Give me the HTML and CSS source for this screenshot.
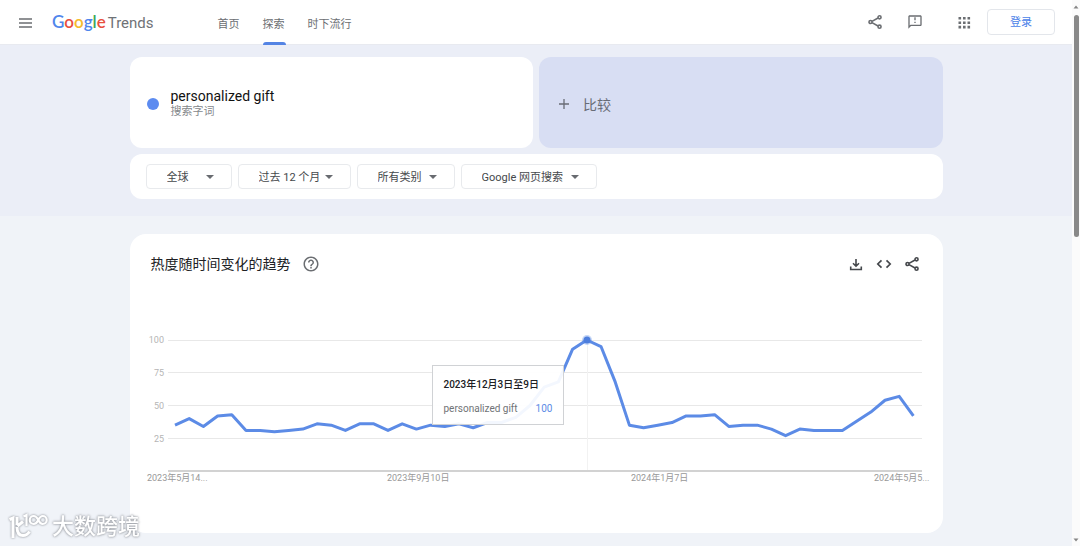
FILE: index.html
```html
<!DOCTYPE html>
<html lang="zh-CN">
<head>
<meta charset="utf-8">
<meta name="viewport" content="width=device-width, initial-scale=1">
<title>personalized gift - Google Trends</title>
<link rel="stylesheet" href="styles.css">
</head>
<body>
<svg class="defs" aria-hidden="true">
  <symbol id="share" viewBox="0 0 24 24"><g fill="none" stroke="currentColor" stroke-width="2.4"><path d="M7.500 11l9-5M7.500 13l9 5"/><circle cx="5.300" cy="12" r="2.300"/><circle cx="18.800" cy="5" r="2.300"/><circle cx="18.800" cy="19" r="2.300"/></g></symbol>
</svg>
<div class="page">
  <header class="topbar">
    <button class="icon-btn" aria-label="主菜单"><svg class="icon" viewBox="0 0 16 16"><path d="M2 5h13M2 9h13M2 13h13" stroke="currentColor" stroke-width="1.400"/></svg></button>
    <a class="logo" href="#"><span class="google"><span class="blue">G</span><span class="red">o</span><span class="yellow">o</span><span class="blue">g</span><span class="green">l</span><span class="red">e</span></span><span class="trends">Trends</span></a>
    <nav class="tabs">
      <a href="#">首页</a>
      <a href="#" class="active">探索</a>
      <a href="#">时下流行</a>
    </nav>
    <div class="actions">
      <button class="icon-btn share-btn" aria-label="分享"><svg class="icon"><use href="#share"/></svg></button>
      <button class="icon-btn feedback-btn" aria-label="发送反馈"><svg class="icon" viewBox="0 0 24 24"><path fill="currentColor" d="M20 2H4C2.900 2 2 2.900 2 4v18l4-4h14c1.100 0 2-.9 2-2V4c0-1.100-.9-2-2-2zm0 14H5.200L4 17.200V4h16v12zM11 5h2v4.500h-2zM11 11.500h2v2h-2z"/></svg></button>
      <button class="icon-btn apps-btn" aria-label="Google 应用"><svg class="icon" viewBox="0 0 16 16"><path fill="currentColor" d="M2.500 3h2.600v2.600H2.500zM7 3h2.600v2.600H7zM11.500 3h2.600v2.600h-2.600zM2.500 7.400h2.600V10H2.500zM7 7.400h2.600V10H7zM11.500 7.400h2.600V10h-2.600zM2.500 11.800h2.600v2.600H2.500zM7 11.800h2.600v2.600H7zM11.500 11.800h2.600v2.600h-2.600z"/></svg></button>
      <a class="login" href="#">登录</a>
    </div>
  </header>

  <section class="explore">
    <div class="wrap">
      <div class="terms">
        <div class="term">
          <span class="dot"></span>
          <div><div class="term-name">personalized gift</div><div class="term-type">搜索字词</div></div>
        </div>
        <button class="compare"><svg class="plus" viewBox="0 0 12 12"><path d="M6 1v10M1 6h10" stroke="currentColor" stroke-width="1.300"/></svg>比较</button>
      </div>
      <div class="filters">
        <label class="filter"><select aria-label="地区"><option>全球</option></select></label>
        <label class="filter tight"><select aria-label="时间"><option>过去 12 个月</option></select></label>
        <label class="filter"><select aria-label="类别"><option>所有类别</option></select></label>
        <label class="filter"><select aria-label="搜索类型"><option>Google 网页搜索</option></select></label>
      </div>
    </div>
  </section>

  <main class="wrap">
    <section class="card">
      <div class="card-head">
        <h1>热度随时间变化的趋势</h1>
        <button class="icon-btn help" aria-label="帮助"><svg class="icon" viewBox="0 0 24 24"><path fill="currentColor" d="M11 18h2v-2h-2v2zm1-16C6.480 2 2 6.480 2 12s4.480 10 10 10 10-4.480 10-10S17.520 2 12 2zm0 18c-4.410 0-8-3.590-8-8s3.590-8 8-8 8 3.590 8 8-3.590 8-8 8zm0-14c-2.210 0-4 1.790-4 4h2c0-1.100.9-2 2-2s2 .9 2 2c0 2-3 1.750-3 5h2c0-2.250 3-2.500 3-5 0-2.210-1.790-4-4-4z"/></svg></button>
        <div class="card-tools">
          <button class="icon-btn" aria-label="下载"><svg class="icon" viewBox="0 0 16 16"><path d="M8 3v7M5 7.200l3 3 3-3M2.700 10.500v3h10.600v-3" fill="none" stroke="currentColor" stroke-width="1.600"/></svg></button>
          <button class="icon-btn" aria-label="嵌入"><svg class="icon" viewBox="0 0 16 16"><path d="M5.500 4.300L1.800 8l3.700 3.700M10.500 4.300L14.200 8l-3.700 3.700" fill="none" stroke="currentColor" stroke-width="1.700"/></svg></button>
          <button class="icon-btn" aria-label="分享"><svg class="icon"><use href="#share"/></svg></button>
        </div>
      </div>
      <div class="chart">
        <svg class="plot" viewBox="0 0 813 170" role="img" aria-label="personalized gift 搜索热度">
          <path class="grid" d="M38 20.500H792M38 52.500H792M38 85.500H792M38 118.500H792"/>
          <path class="cursor" d="M457.500 20V150"/>
          <path class="axis" d="M38 151H792"/>
          <g class="ylabels"><text x="34" y="23">100</text><text x="34" y="56">75</text><text x="34" y="89">50</text><text x="34" y="122">25</text></g>
          <g class="xlabels"><text x="17" y="161">2023年5月14...</text><text x="257" y="161">2023年9月10日</text><text x="501" y="161">2024年1月7日</text><text x="744" y="161">2024年5月5...</text></g>
          <polyline class="series" transform="matrix(14.2 0 0 -1.31 45 151)" points="0,35 1,40 2,34 3,42 4,43 5,31 6,31 7,30 8,31 9,32 10,36 11,35 12,31 13,36 14,36 15,31 16,36 17,32 18,35 19,34 20,36 21,33 22,37 23,37 24,41 25,50 26,64 27,68 28,93 29,100 30,95 31,68 32,35 33,33 34,35 35,37 36,42 37,42 38,43 39,34 40,35 41,35 42,32 43,27 44,32 45,31 46,31 47,31 48,38 49,45 50,54 51,57 52,42"/>
          <circle class="halo" cx="457" cy="20" r="5"/><circle class="peak" cx="457" cy="20" r="3.500"/>
        </svg>
        <div class="tooltip">
          <div class="tip-date">2023年12月3日至9日</div>
          <div class="tip-row"><span>personalized gift</span><span class="tip-value">100</span></div>
        </div>
      </div>
    </section>
  </main>
</div>
<div class="scrollbar" aria-hidden="true">
  <svg class="arrow" viewBox="0 0 8 8"><path d="M1.500 5.500L4 2.500l2.500 3z" fill="currentColor"/></svg>
  <span class="thumb"></span>
  <svg class="arrow" viewBox="0 0 8 8"><path d="M1.500 2.500h5L4 5.500z" fill="currentColor"/></svg>
</div>
<div class="watermark">
  <svg class="mark" viewBox="0 0 40 28"><path d="M1.500 6.500L5 5v20M9 4v8M15 8.500L9.500 13M9 14c0 5 2 8.500 6 8.500 3 0 5-1.500 6.500-4" stroke-width="3"/><path d="M15.500 3.500l3-1.500v11M30.300 7c-1.500-3-3-4-4.600-4a4 4 0 1 0 0 8c1.600 0 3.100-1 4.600-4 1.500-3 3-4 4.400-4a4 4 0 1 1 0 8c-1.400 0-2.900-1-4.400-4" stroke-width="2.200"/></svg>
  <span>大数跨境</span>
</div>
</body>
</html>
```
FILE: styles.css
```css
* { box-sizing: border-box; }
body {
  margin: 0;
  display: flex;
  min-height: 100vh;
  background: #f0f3f8;
  color: #202124;
  font-family: Roboto, "Noto Sans CJK SC", sans-serif;
  font-size: 11px;
}
button, select { font: inherit; color: inherit; }
a { color: inherit; text-decoration: none; }
.defs { position: absolute; width: 0; height: 0; }
.page { flex: 1; min-width: 0; }
.icon { display: block; width: 16px; height: 16px; }
.icon-btn { padding: 0; border: 0; background: none; color: #6b6e72; }

.topbar {
  display: flex;
  align-items: center;
  height: 45px;
  padding: 0 17px;
  background: #fff;
  border-bottom: 1px solid #e8eaf0;
}
.logo {
  display: flex;
  align-items: baseline;
  gap: 2px;
  margin-left: 19px;
  font-family: Lato, sans-serif;
  font-size: 17px;
  line-height: 20px;
}
.google { font-weight: 600; }
.trends { color: #6f7276; font-family: Roboto, sans-serif; font-size: 15px; }
.blue { color: #4f86ec; }
.red { color: #e8503f; }
.yellow { color: #f6bb2c; }
.green { color: #42a85a; }
.tabs { display: flex; gap: 22px; align-self: stretch; margin-left: 64px; color: #6b6e72; }
.tabs a { position: relative; display: flex; align-items: center; padding-top: 1px; min-width: 23px; }
.tabs .active::after {
  content: "";
  position: absolute;
  left: 0; right: 0; bottom: -1px;
  height: 3px;
  border-radius: 3px 3px 0 0;
  background: #5484e4;
}
.actions { display: flex; align-items: center; margin-left: auto; }
.feedback-btn { margin-left: 24px; }
.apps-btn { margin: 0 15px 0 33px; }
.login {
  width: 68px;
  padding: 5px 0 3px;
  border: 1px solid #e3e6eb;
  border-radius: 4px;
  color: #4a7fe8;
  line-height: 16px;
  text-align: center;
}

.wrap { max-width: 813px; margin: 0 auto; }
.explore { padding: 12px 0 17px; background: #ebeef7; }
.terms { display: grid; grid-template-columns: 1fr 1fr; gap: 6px; }
.term, .compare {
  display: flex;
  align-items: center;
  height: 91px;
  border-radius: 12px;
}
.term { gap: 12px; padding: 2px 17px 0; background: #fff; }
.dot { width: 12px; height: 12px; border-radius: 50%; background: #5c8bf0; }
.term-name { color: #111; font-size: 14px; line-height: 16px; }
.term-type { color: #85888c; line-height: 16px; }
.compare {
  gap: 13px;
  padding: 2px 19px 0;
  border: 0;
  background: #d8def3;
  color: #686c76;
  font-size: 14px;
}
.plus { width: 12px; height: 12px; }
.filters {
  display: flex;
  flex-wrap: wrap;
  gap: 6px;
  margin-top: 6px;
  padding: 10px 16px;
  border-radius: 12px;
  background: #fff;
}
.filter { position: relative; }
.filter select {
  display: block;
  min-width: 86px;
  height: 25px;
  padding: 1px 32px 0 20px;
  border: 1px solid #e8eaed;
  border-radius: 4px;
  background: #fff;
  color: #45484c;
  appearance: none;
}
.filter.tight select { padding-right: 29px; }
.filter::after {
  content: "";
  position: absolute;
  top: 11px;
  right: 18px;
  border: 4px solid transparent;
  border-top-color: #686b70;
  border-bottom: 0;
}

.card { margin: 18px 0 14px; padding-bottom: 43px; border-radius: 16px; background: #fff; }
.card-head { display: flex; align-items: center; height: 60px; padding: 0 23px 0 21px; }
h1 { margin: 0; font-size: 14px; font-weight: 400; line-height: 20px; }
.help { margin-left: 11px; }
.help .icon { width: 18px; height: 18px; }
.card-tools { display: flex; gap: 12px; margin-left: auto; }
.card-tools .icon-btn { color: #45484c; }
.chart { position: relative; padding-top: 26px; }
.plot { display: block; width: 100%; height: auto; }
.grid { stroke: #e8e8e8; }
.cursor { stroke: #f2f2f2; }
.axis { stroke: #d2d2d2; stroke-width: 2; }
.ylabels, .xlabels { font-size: 9px; }
.ylabels { fill: #b5b5b5; text-anchor: end; }
.xlabels { fill: #999; }
.series { fill: none; stroke: #5c8be6; stroke-width: 3; stroke-linejoin: round; vector-effect: non-scaling-stroke; }
.halo { fill: #5c8be6; opacity: .35; }
.peak { fill: #4d7edd; }
.tooltip {
  position: absolute;
  left: 302px;
  top: 71px;
  padding: 11px 11px 7px;
  border: 1px solid #d0d2d5;
  background: rgba(255, 255, 255, .93);
  font-size: 10px;
  line-height: 16px;
}
.tip-date { font-weight: 500; }
.tip-row { display: flex; gap: 18px; margin-top: 8px; color: #707376; }
.tip-value { color: #5c8be6; }

.scrollbar {
  display: flex;
  flex-direction: column;
  align-items: center;
  flex: none;
  width: 8px;
  padding: 3px 0;
  background: #fbfbfb;
  color: #858585;
}
.arrow { width: 8px; height: 8px; }
.thumb { width: 5px; height: 222px; margin: 4px 0 auto; border-radius: 3px; background: #898989; }

.watermark {
  position: fixed;
  left: 8px;
  bottom: 4px;
  display: flex;
  align-items: center;
  gap: 4px;
  color: #fff;
  font-size: 22px;
  font-weight: 500;
  line-height: 30px;
  text-shadow: 0 0 2px #8e9299, 0 0 3px #a5a8ae;
}
.mark { width: 40px; height: 28px; fill: none; stroke: #fff; filter: drop-shadow(0 0 1px #7e8289); }
```
